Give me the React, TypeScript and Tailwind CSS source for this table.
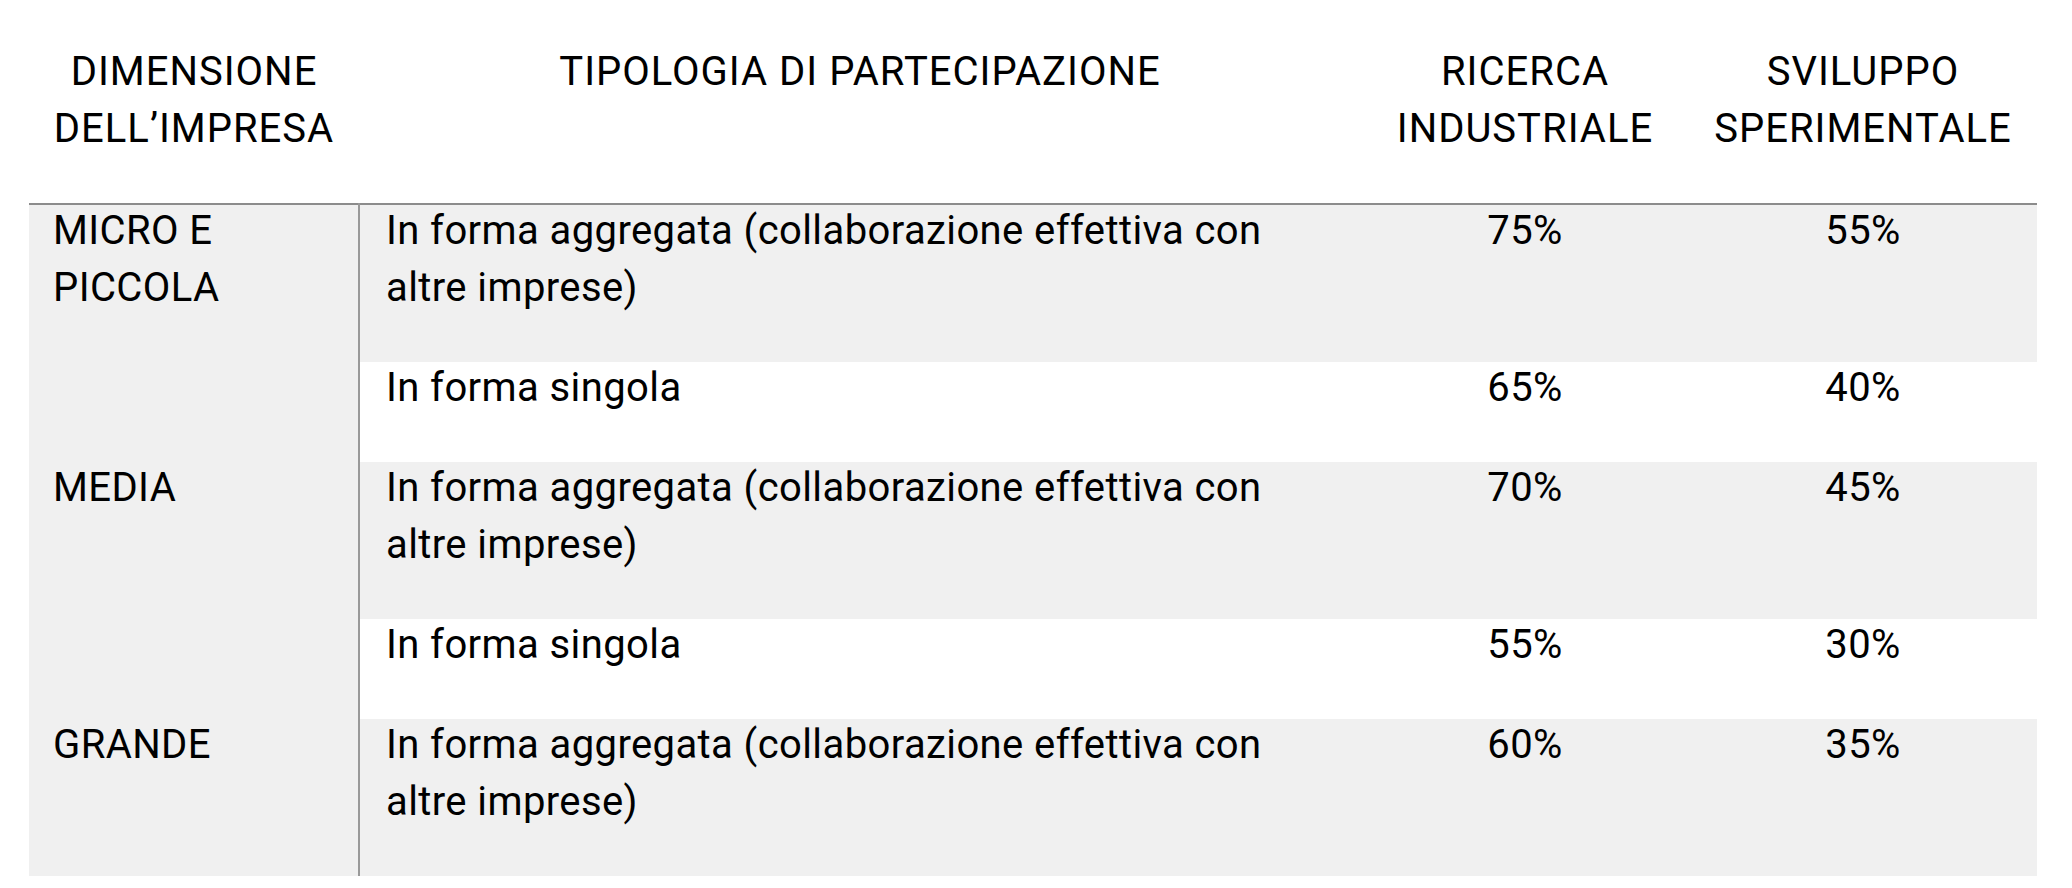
import React from "react";

const rows = [
  { size: "MICRO E\nPICCOLA", span: 2, type: "In forma aggregata (collaborazione effettiva con\naltre imprese)", r: "75%", s: "55%", gray: true },
  { type: "In forma singola", r: "65%", s: "40%", gray: false },
  { size: "MEDIA", span: 2, type: "In forma aggregata (collaborazione effettiva con\naltre imprese)", r: "70%", s: "45%", gray: true },
  { type: "In forma singola", r: "55%", s: "30%", gray: false },
  { size: "GRANDE", span: 1, type: "In forma aggregata (collaborazione effettiva con\naltre imprese)", r: "60%", s: "35%", gray: true },
];

function Cell({ children }: { children: React.ReactNode }) {
  return <div className="-mt-[3px] whitespace-pre-line">{children}</div>;
}

export default function App() {
  return (
    <div
      className="w-[2072px] h-[888px] bg-white text-black pl-[29px] pr-[35px]"
      style={{ fontFamily: "Roboto, 'Liberation Sans', sans-serif" }}
    >
      <table className="w-[2008px] border-collapse table-fixed text-[40px] leading-[57px] tracking-[0.4px]">
        <colgroup>
          <col className="w-[330px]" />
          <col className="w-[1002px]" />
          <col className="w-[328px]" />
          <col className="w-[348px]" />
        </colgroup>
        <thead>
          <tr className="h-[204px] border-b-2 border-[#8c8c8c] tracking-[1px]">
            <th className="align-top pt-[43px] font-normal text-center">
              DIMENSIONE
              <br />
              DELL’IMPRESA
            </th>
            <th className="align-top pt-[43px] font-normal text-center">TIPOLOGIA DI PARTECIPAZIONE</th>
            <th className="align-top pt-[43px] font-normal text-center">
              RICERCA
              <br />
              INDUSTRIALE
            </th>
            <th className="align-top pt-[43px] font-normal text-center">
              SVILUPPO
              <br />
              SPERIMENTALE
            </th>
          </tr>
        </thead>
        <tbody>
          {rows.map((row, i) => (
            <tr key={i} className={row.gray ? "bg-[#f0f0f0]" : "bg-white"}>
              {row.size !== undefined && (
                <td
                  rowSpan={row.span}
                  className="align-top bg-[#f0f0f0] pl-[24px] pt-0 pb-[46px] border-r-2 border-[#999999]"
                >
                  <Cell>{row.size}</Cell>
                </td>
              )}
              <td className="align-top pl-[26px] pt-0 pb-[46px]">
                <Cell>{row.type}</Cell>
              </td>
              <td className="align-top text-center pt-0 pb-[46px]">
                <Cell>{row.r}</Cell>
              </td>
              <td className="align-top text-center pt-0 pb-[46px]">
                <Cell>{row.s}</Cell>
              </td>
            </tr>
          ))}
        </tbody>
      </table>
    </div>
  );
}
